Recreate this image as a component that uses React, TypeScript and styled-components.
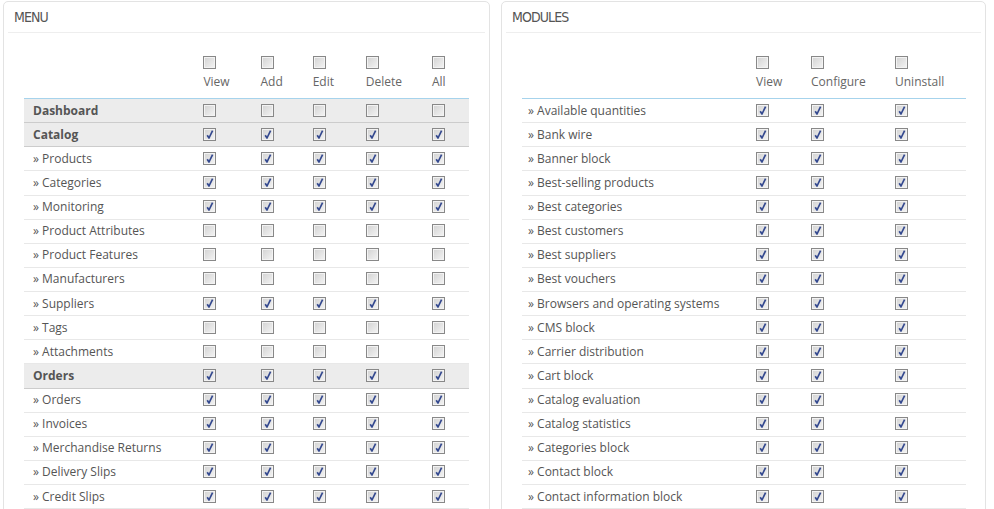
import styled, { createGlobalStyle } from 'styled-components';

const GlobalStyle = createGlobalStyle`
    body {
        margin: 0;
        background: #fff;
        font-family: 'Open Sans', 'Liberation Sans', sans-serif;
        color: #555;
    }
`;

const Page = styled.div`
    display: flex;
    gap: 11px;
    padding: 1px 0 0 3px;
`;

const Panel = styled.div<{ $width: number }>`
    width: ${(p) => p.$width}px;
    box-sizing: border-box;
    min-height: 530px;
    border: 1px solid #e3e3e3;
    border-radius: 5px;
    padding: 0 4px;
    background: #fff;
`;

const PanelHeading = styled.div`
    height: 30px;
    line-height: 31px;
    padding-left: 6px;
    border-bottom: 1px solid #eee;
    font-family: 'DejaVu Sans Condensed', 'DejaVu Sans', sans-serif;
    font-stretch: condensed;
    font-size: 14px;
    letter-spacing: -0.9px;
    text-transform: uppercase;
    color: #555;
`;

const TableWrap = styled.div`
    padding: 0 16px;
`;

const Table = styled.table`
    width: 100%;
    table-layout: fixed;
    border-collapse: separate;
    border-spacing: 0;
    font-size: 12px;
`;

const HeadCell = styled.th`
    box-sizing: border-box;
    height: 66px;
    padding: 0 0 7px;
    vertical-align: bottom;
    text-align: left;
    font-weight: normal;
    border-bottom: 1px solid #a6d3ec;
    color: #666;
    line-height: 18px;
`;

const HeadLabel = styled.div`
    margin-top: 1px;
`;

const Row = styled.tr<{ $group?: boolean }>`
    background: ${(p) => (p.$group ? '#ececec' : 'transparent')};

    td {
        border-bottom: 1px solid ${(p) => (p.$group ? '#cccccc' : '#e8e8e8')};
    }
`;

const NameCell = styled.td<{ $group?: boolean; $indent: number }>`
    box-sizing: border-box;
    height: 24.125px;
    padding: 0 0 0 ${(p) => p.$indent}px;
    font-weight: ${(p) => (p.$group ? 700 : 400)};
    white-space: nowrap;
    line-height: 18px;
    vertical-align: middle;
`;

const BoxCell = styled.td`
    box-sizing: border-box;
    height: 24.125px;
    padding: 0;
    vertical-align: middle;
    line-height: 18px;
`;

const Box = styled.span`
    display: inline-block;
    box-sizing: border-box;
    width: 13px;
    height: 13px;
    border: 1px solid #888;
    background: linear-gradient(135deg, #d2d2d2 0%, #f4f4f4 100%);
    box-shadow: inset 0 0 0 1px #f3f3f3;
    vertical-align: -2px;
    position: relative;

    svg {
        position: absolute;
        left: 1px;
        top: 0px;
    }
`;

const Check = ({ on }: { on: boolean }) => (
    <Box>
        {on && (
            <svg width="10" height="11" viewBox="0 0 10 11">
                <path d="M2.2 6.2 L4 9 L7.6 1.6" fill="none" stroke="#34498f" strokeWidth="1.7" strokeLinejoin="round" />
            </svg>
        )}
    </Box>
);

type MenuRow = { name: string; group?: boolean; on: boolean };

const menuRows: MenuRow[] = [
    { name: 'Dashboard', group: true, on: false },
    { name: 'Catalog', group: true, on: true },
    { name: 'Products', on: true },
    { name: 'Categories', on: true },
    { name: 'Monitoring', on: true },
    { name: 'Product Attributes', on: false },
    { name: 'Product Features', on: false },
    { name: 'Manufacturers', on: false },
    { name: 'Suppliers', on: true },
    { name: 'Tags', on: false },
    { name: 'Attachments', on: false },
    { name: 'Orders', group: true, on: true },
    { name: 'Orders', on: true },
    { name: 'Invoices', on: true },
    { name: 'Merchandise Returns', on: true },
    { name: 'Delivery Slips', on: true },
    { name: 'Credit Slips', on: true },
];

const modules = [
    'Available quantities',
    'Bank wire',
    'Banner block',
    'Best-selling products',
    'Best categories',
    'Best customers',
    'Best suppliers',
    'Best vouchers',
    'Browsers and operating systems',
    'CMS block',
    'Carrier distribution',
    'Cart block',
    'Catalog evaluation',
    'Catalog statistics',
    'Categories block',
    'Contact block',
    'Contact information block',
];

const menuCols = [
    { label: 'View', width: 57 },
    { label: 'Add', width: 52 },
    { label: 'Edit', width: 53 },
    { label: 'Delete', width: 66 },
    { label: 'All', width: 37 },
];

const moduleCols = [
    { label: 'View', width: 55 },
    { label: 'Configure', width: 84 },
    { label: 'Uninstall', width: 71 },
];

const App = () => {
    return (
        <>
            <GlobalStyle />
            <Page>
                <Panel $width={487}>
                    <PanelHeading>Menu</PanelHeading>
                    <TableWrap>
                        <Table>
                            <colgroup>
                                <col style={{ width: 179 }} />
                                {menuCols.map((c) => (
                                    <col key={c.label} style={{ width: c.width }} />
                                ))}
                            </colgroup>
                            <thead>
                                <tr>
                                    <HeadCell />
                                    {menuCols.map((c) => (
                                        <HeadCell key={c.label}>
                                            <Check on={false} />
                                            <HeadLabel>{c.label}</HeadLabel>
                                        </HeadCell>
                                    ))}
                                </tr>
                            </thead>
                            <tbody>
                                {menuRows.map((r, i) => (
                                    <Row key={i} $group={r.group}>
                                        <NameCell $group={r.group} $indent={9}>
                                            {r.group ? r.name : `» ${r.name}`}
                                        </NameCell>
                                        {menuCols.map((c) => (
                                            <BoxCell key={c.label}>
                                                <Check on={r.on} />
                                            </BoxCell>
                                        ))}
                                    </Row>
                                ))}
                            </tbody>
                        </Table>
                    </TableWrap>
                </Panel>
                <Panel $width={485}>
                    <PanelHeading>Modules</PanelHeading>
                    <TableWrap>
                        <Table>
                            <colgroup>
                                <col style={{ width: 234 }} />
                                {moduleCols.map((c) => (
                                    <col key={c.label} style={{ width: c.width }} />
                                ))}
                            </colgroup>
                            <thead>
                                <tr>
                                    <HeadCell />
                                    {moduleCols.map((c) => (
                                        <HeadCell key={c.label}>
                                            <Check on={false} />
                                            <HeadLabel>{c.label}</HeadLabel>
                                        </HeadCell>
                                    ))}
                                </tr>
                            </thead>
                            <tbody>
                                {modules.map((m) => (
                                    <Row key={m}>
                                        <NameCell $indent={6}>» {m}</NameCell>
                                        {moduleCols.map((c) => (
                                            <BoxCell key={c.label}>
                                                <Check on />
                                            </BoxCell>
                                        ))}
                                    </Row>
                                ))}
                            </tbody>
                        </Table>
                    </TableWrap>
                </Panel>
            </Page>
        </>
    );
};

export default App;
